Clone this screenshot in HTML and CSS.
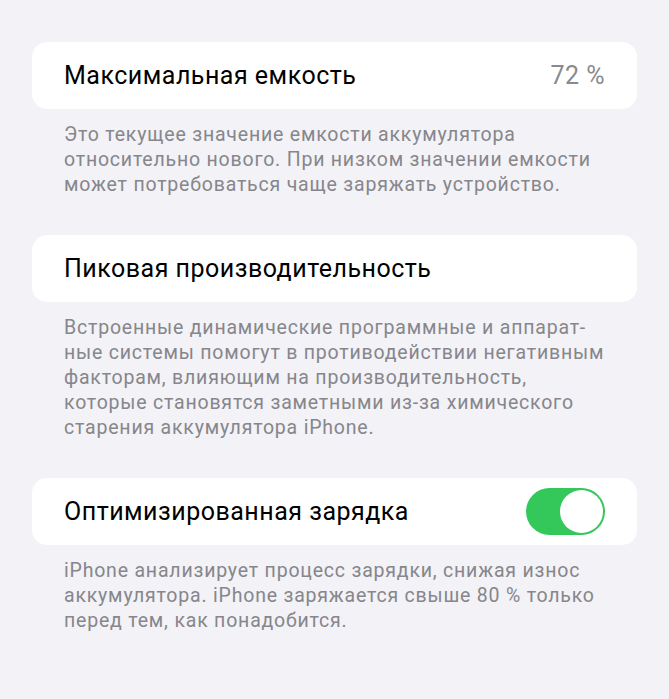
FILE: index.html
```html
<!DOCTYPE html>
<html lang="ru">
<head>
  <meta charset="UTF-8" />
  <meta name="viewport" content="width=device-width, initial-scale=1" />
  <title>Аккумулятор</title>
  <link rel="stylesheet" href="styles.css">
</head>
<body>
  <section class="group">
    <div class="cell">
      <span class="cell-title">Максимальная емкость</span>
      <span class="cell-value">72 %</span>
    </div>
    <p class="footer">
      Это текущее значение емкости аккумулятора<br>
      относительно нового. При низком значении емкости<br>
      может потребоваться чаще заряжать устройство.
    </p>
  </section>

  <section class="group">
    <div class="cell">
      <span class="cell-title">Пиковая производительность</span>
    </div>
    <p class="footer">
      Встроенные динамические программные и аппарат-<br>
      ные системы помогут в противодействии негативным<br>
      факторам, влияющим на производительность,<br>
      которые становятся заметными из-за химического<br>
      старения аккумулятора iPhone.
    </p>
  </section>

  <section class="group">
    <div class="cell">
      <span class="cell-title">Оптимизированная зарядка</span>
      <label class="switch">
        <input type="checkbox" checked>
        <span class="knob"></span>
      </label>
    </div>
    <p class="footer">
      iPhone анализирует процесс зарядки, снижая износ<br>
      аккумулятора. iPhone заряжается свыше 80 % только<br>
      перед тем, как понадобится.
    </p>
  </section>
</body>
</html>
```

FILE: styles.css
```css
body {
  margin: 0;
  padding: 42px 32px 0;
  background: #f2f2f7;
  font-family: Roboto, "Liberation Sans", sans-serif;
  color: #000;
}
.group {
  margin: 0;
}
.cell {
  display: flex;
  align-items: center;
  justify-content: space-between;
  height: 67px;
  padding: 0 32px;
  background: #fff;
  border-radius: 15px;
}
.cell-title {
  font-size: 25px;
  letter-spacing: 0.5px;
}
.cell-value {
  font-size: 25px;
  letter-spacing: 0.5px;
  color: #8a8a8e;
}
/* lines are broken by hand, so keep each one whole */
.footer {
  margin: 13px 0 38px;
  padding: 0 32px;
  font-size: 19.5px;
  line-height: 25px;
  letter-spacing: 0.8px;
  white-space: nowrap;
  color: #86868b;
}
.switch {
  position: relative;
  display: block;
  width: 79px;
  height: 47px;
}
.switch input {
  display: none;
}
.switch .knob {
  position: absolute;
  inset: 0;
  background: #34c759;
  border-radius: 24px;
}
.switch .knob::after {
  content: "";
  position: absolute;
  top: 2px;
  right: 2px;
  width: 43px;
  height: 43px;
  border-radius: 50%;
  background: #fff;
}
```
